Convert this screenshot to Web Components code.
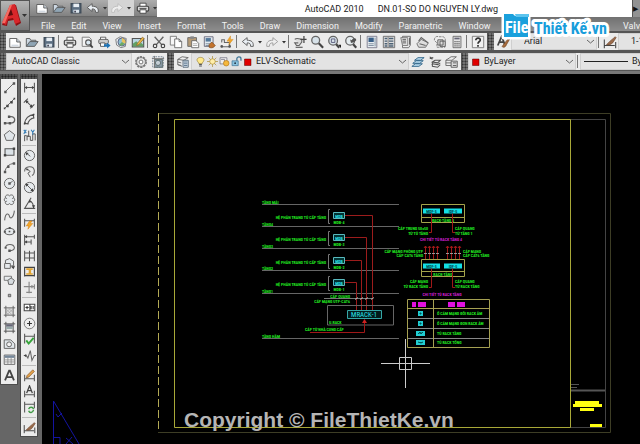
<!DOCTYPE html>
<html lang="vi">
<head>
<meta charset="utf-8">
<title>AutoCAD 2010</title>
<style>
html,body{margin:0;height:100%;overflow:hidden;background:#000}
</style>
</head>
<body>
<cad-app></cad-app>
<script>
const ICONS = {
  new:'<path d="M2 4h8l4 4v6H2z" fill="#fff" stroke="#555"/><path d="M10 4v4h4" fill="#ccd5df" stroke="#555"/><path d="M4 11h8v2H4z" fill="#d3dae2"/>',
  open:'<path d="M1.5 13V4h4l1 2h6v2" fill="#cdd8e3" stroke="#555"/><path d="M1.5 13l4-5.5H15L11 13z" fill="#8fa5b5" stroke="#555"/>',
  save:'<path d="M2.5 3h11v10.500h-11z" fill="#5c6f82" stroke="#3f4b58" stroke-width="1.500"/><path d="M5 3h6.500v4H5z" fill="#e8eef4"/><path d="M5 10h6.500v3.500H5z" fill="#dce4ec"/><path d="M6 11h2v2H6z" fill="#445"/>',
  undo:'<path d="M7 3v3c5 0 7.500 2 7 7h-3c0-3-1-4-4-4v3L1.500 7.500z" fill="#e9eef3" stroke="#555"/>',
  redo:'<path d="M9 3v3c-5 0-7.500 2-7 7h3c0-3 1-4 4-4v3l5.500-4.500z" fill="#eee" stroke="#999"/>',
  redolight:'<path d="M9 3v3c-5 0-7.500 2-7 7h3c0-3 1-4 4-4v3l5.500-4.500z" fill="#eee" stroke="#bbb"/>',
  print:'<path d="M4.500 6V2.500h7V6" fill="#fff" stroke="#444"/><rect x="1.500" y="6" width="13" height="5.500" rx="1.500" fill="#d9d9d9" stroke="#444" stroke-width="1.300"/><path d="M4.500 10h7v4h-7z" fill="#fff" stroke="#444"/><path d="M4 8.500h8" stroke="#444"/>',
  preview:'<path d="M2.500 2.500h8l2.500 2.500v8H2.500z" fill="#f4f4f4" stroke="#777"/><circle cx="9.500" cy="8.500" r="3" fill="#dce9f2" stroke="#555" stroke-width="1.300"/><path d="M11.500 11l3 3.500" stroke="#444" stroke-width="2"/>',
  publish:'<path d="M4 5.500v-3h6v3" fill="#fff" stroke="#555"/><rect x="2" y="5" width="11" height="5" rx="1.500" fill="#ccc" stroke="#555"/><path d="M4 9h5v4H4z" fill="#fff" stroke="#555"/><path d="M8 10.500h3.500V8.500l4 3.500-4 3.500v-2H8z" fill="#1f73b5"/>',
  dwf:'<path d="M2 5l5-3 7 2-1 9-5 1.500-5-3z" fill="#e5ebef" stroke="#777"/><circle cx="9" cy="8" r="4.500" fill="#8fc0d4" stroke="#557"/><path d="M9 3.500V8l4 2c1-3-1-6-4-6.500" fill="#e8c35c"/><path d="M9 8l-3 3c2 2 4 1.500 6-1z" fill="#6caa62"/>',
  render:'<path d="M1.500 4h13v9.500h-13z" fill="#b9d6e2" stroke="#555" stroke-width="1.300"/><path d="M2 13v-3l4-3 3 3 3-1 2 2v2z" fill="#63a065"/><path d="M7 10l6-7.500 2 1.500-6 7-2.500 1z" fill="#eeb84a" stroke="#8a6527" stroke-width=".8"/>',
  cut:'<path d="M3 2l8 9M13 2L5 11" stroke="#666" stroke-width="1.600"/><circle cx="3.500" cy="12.500" r="2" fill="none" stroke="#444" stroke-width="1.300"/><circle cx="12.500" cy="12.500" r="2" fill="none" stroke="#444" stroke-width="1.300"/>',
  copy:'<path d="M1.500 1.500h7v10h-7z" fill="#f6f6f6" stroke="#777"/><path d="M6.500 4.500h5l3 3v7h-8z" fill="#fff" stroke="#666"/><path d="M11.500 4.500v3h3" fill="none" stroke="#666"/>',
  paste:'<path d="M2 3h10v10H2z" fill="#b49a75" stroke="#666"/><path d="M5 1.500h4v3H5z" fill="#888"/><path d="M6.500 6.500h5l3 3v5h-8z" fill="#fff" stroke="#666"/><path d="M8 10h5M8 12h5" stroke="#aaa"/>',
  match:'<path d="M1.500 2h10v11h-10z" fill="#e2e9ef" stroke="#667"/><path d="M3 3.500h6v4H3z" fill="#54799b"/><path d="M3 10h5M3 12h4" stroke="#789"/><path d="M7 11l3-3 4 4c-2 3-5 3-7 2z" fill="#c3742e" stroke="#7a4518" stroke-width=".8"/>',
  blocked:'<path d="M1 13.500h10v-5H5v-3H2v3" fill="#eee" stroke="#666" stroke-width="1.200"/><circle cx="2" cy="13" r="1.500" fill="#555"/><circle cx="11" cy="13" r="1.500" fill="#555"/><path d="M12 1L8 7h3l-1 4 5-6h-3z" fill="#f2a72b" stroke="#ce8518" stroke-width=".5"/>',
  pan:'<path d="M2 5c2-2 4-1 8 0v3l-3 4H4L2 9h4" fill="#ddd" stroke="#666" stroke-width="1.300"/><path d="M3 14h8M12.500 1v8M8.500 5h7" stroke="#444" stroke-width="1.400"/>',
  zoom:'<circle cx="6.500" cy="6" r="4.500" fill="#d7e2e9" stroke="#666" stroke-width="1.500"/><path d="M10 9.500l5 5" stroke="#444" stroke-width="2.500"/>',
  zoomwin:'<circle cx="7" cy="6.500" r="5" fill="#d7e2e9" stroke="#666" stroke-width="1.500"/><path d="M5 4.500h4v4H5z" fill="none" stroke="#557"/><path d="M10.500 10.500l3.500 4" stroke="#444" stroke-width="2.500"/><path d="M13 11h3v4z" fill="#222"/>',
  zoomprev:'<circle cx="7" cy="6.500" r="5" fill="#e5ecef" stroke="#666" stroke-width="1.500"/><path d="M14 6c0-3-4-3-5 0l-2-1 1 4 4-1" fill="#555"/><path d="M10.500 10.500l3.500 4" stroke="#444" stroke-width="2.500"/>',
  props:'<path d="M2.500 1.500h11v13h-11z" fill="#e8edf1" stroke="#778"/><path d="M4 3h6v5H4z" fill="#395f87"/><path d="M4 10h6M4 12h6M11.500 3v10" stroke="#789"/>',
  design:'<path d="M1.500 1.500h13v13h-13z" fill="#ddd" stroke="#666"/><path d="M3 4h3M8 4h5M3 7h3M8 7h5M3 10h3M8 10h5M3 12.500h3M8 12.500h5" stroke="#4c6275" stroke-width="1.700"/><path d="M7 2v12" stroke="#777"/>',
  palette:'<path d="M4 1.500h9v10l-2 3H4z" fill="#eee" stroke="#666"/><path d="M2 3h8v9H4z" fill="#ddd" stroke="#777"/><path d="M4 5h4M4 7h4M4 9h4M12 3v8" stroke="#555"/>',
  sheets:'<path d="M1 10l5-5 8 4-3 5H3z" fill="#ddd" stroke="#666"/><path d="M3 7l3-4 8 6M4 10l7 2" fill="none" stroke="#666" stroke-width="1.300"/>',
  markup:'<path d="M1.500 6c0-4 3-5 5-4h5c3 1 3 4 2 6v6h-9v-5z" fill="#eee" stroke="#777" stroke-dasharray="3 1"/><path d="M5.500 5.500h6v6h-6zM8 7h6v6H8z" fill="#ddd" stroke="#555"/>',
  calc:'<path d="M3.500 1.500h9v13h-9z" fill="#e5e5e5" stroke="#666"/><path d="M5 3h6v2H5z" fill="#667"/><path d="M5 7.500h6M5 10h6M5 12.500h6" stroke="#666" stroke-width="1.500" stroke-dasharray="1.500 .8"/>',
  help:'<path d="M1.500 1.500h13v13h-13z" fill="#f1f1f1" stroke="#777"/><path d="M5.500 6c0-3.500 5.500-3 5 0-.5 2-2.500 1.500-2.500 4" fill="none" stroke="#333" stroke-width="2"/><path d="M7 11.500h2v2H7z" fill="#333"/>',
  textstyle:'<path d="M2 12L6.500 1.500 10 11M3.500 8h5" fill="none" stroke="#444" stroke-width="2"/><path d="M7 13l3-4 5-6 1 1-4 7c-1 3-4 4-5 2" fill="#a66b3d" stroke="#6d4425" stroke-width=".7"/>',
  dimstyle:'<path d="M1.500 5v10M1.500 12h12M14.500 8v7" stroke="#444" stroke-width="1.200"/><path d="M4 11l4-4 6-5 1 1-4 6c-2 2-5 3-7 2" fill="#9a6b4b" stroke="#6a4530" stroke-width=".7"/>',
  gear:'<circle cx="8" cy="8" r="5.800" fill="#eee" stroke="#777" stroke-width="2" stroke-dasharray="2.600 1"/><circle cx="8" cy="8" r="5" fill="#e8e8e8" stroke="#777"/><circle cx="8" cy="8" r="2.200" fill="#fff" stroke="#666"/>',
  workspace:'<path d="M2 2h12v12H2z" fill="none" stroke="#678" stroke-dasharray="2 1"/><path d="M4 5h9v9H4z" fill="#8999a8" stroke="#566"/><circle cx="8" cy="9" r="3" fill="#c4ced6" stroke="#566"/><path d="M1 4h14M4 1v14" stroke="#777"/>',
  layers:'<path d="M2 5l5-3 7 1-5 3zM2 8l4 1M2 11l4 1M2 5v6l5 2" fill="#eee" stroke="#666"/><path d="M8 6h6v8H8z" fill="#d5e0ea" stroke="#567"/><path d="M9 8h4M9 10h4M9 12h4" stroke="#57718a"/>',
  layers2:'<path d="M1 13l4-3h8l-4 3zM2 9.500l4-3h8l-4 3zM4 6l4-3h7l-4 3z" fill="#b5d8ec" stroke="#2f6488"/>',
  layers3:'<path d="M2 4l4-1M2 2l3 3M5 8l3-2h6l-3 3zM4 11l3-1M5 8v5l6 1 3-3M5 10l6 1 3-2" fill="none" stroke="#555" stroke-width="1.200"/>',
  layers4:'<path d="M1 6l6-4h6l-5 4zM1 6v6h6M1 9h6" fill="#eee" stroke="#666"/><path d="M7 7h7v7H7z" fill="#ddd" stroke="#555"/><path d="M9 9h4M9 12h4" stroke="#555"/>',
  bulb:'<path d="M5.500 11c0-2-3-3-2.500-6C4 1 12 1 13 5c.5 3-2.500 4-2.500 6z" fill="#ffe98c" stroke="#9a8338"/><path d="M6 12.500h4M6 14.500h4" stroke="#555" stroke-width="1.500"/>',
  sun:'<path d="M8 0v16M0 8h16M2.500 2.500l11 11M13.500 2.500l-11 11" stroke="#a98c34"/><circle cx="8" cy="8" r="4" fill="#ffeeaa" stroke="#a98c34"/>',
  vpsun:'<path d="M1.500 2.500h10v9h-10z" fill="#eee" stroke="#667"/><path d="M3 5h5v4" fill="none" stroke="#667"/><circle cx="10.500" cy="10.500" r="4" fill="#f5b83c" stroke="#b5791c"/>',
  unlock:'<path d="M8.500 7V4c0-3.500 6-3.500 6 0v3" fill="none" stroke="#3c7294" stroke-width="1.800"/><path d="M1.500 7h9v7h-9z" fill="#8cc3df" stroke="#3c7294"/><circle cx="6" cy="10.500" r="1.300" fill="#234"/>',
  red:'<path d="M1 2h13v13H1z" fill="#e00000" stroke="#500"/>',
  caret:'<path d="M4 6h8l-4 5z" fill="#333"/>',
  line:'<path d="M3 13L13 3" stroke="#666" stroke-width="1.200"/><path d="M1.500 12h3v3h-3zM12 1.500h3v3h-3z" fill="#555"/>',
  xline:'<path d="M2 14L14 2" stroke="#666" stroke-width="1.200"/><path d="M1 13h2v2H1zM4 9.500h3v3H4zM9 5h3v3H9zM13 1h2v2h-2z" fill="#444"/>',
  pline:'<path d="M2 12.500h7c7 0 7-8 1-8H8" fill="none" stroke="#666" stroke-width="1.600"/><path d="M1 11h3v3H1zM7 11h3v3H7zM6 3h3v3H6z" fill="#555"/>',
  polygon:'<path d="M8 2l6.500 5-2.500 7H4L1.500 7z" fill="#e1e6ea" stroke="#666" stroke-width="1.200"/>',
  rect:'<path d="M2.500 4.500h11v8h-11z" fill="#dce3e8" stroke="#555" stroke-width="1.300"/><path d="M1 11h3v3H1zM12 3h3v3h-3z" fill="#444"/>',
  arc:'<path d="M2.500 13.500C3 8 7 3.500 13.500 3" fill="none" stroke="#666" stroke-width="1.200"/><path d="M1 12h3v3H1zM5 5.500h3v3H5zM12 1.500h3v3h-3z" fill="#555"/>',
  circle:'<circle cx="8" cy="8" r="6.300" fill="#e6eaed" stroke="#666" stroke-width="1.200"/><path d="M8 8l4-3" stroke="#555"/><path d="M6.500 6.500h3v3h-3z" fill="#555"/>',
  cloud:'<path d="M8 3.500C6 1 2 3 3 6c-2 1.500-2 3.500 0 4.500C2 14 6 15.500 8 13c2 2.500 6 1 5-2.500 2-1 2-3 0-4.500 1-3-3-5-5-2.500z" fill="#e6eaed" stroke="#666" stroke-width="1.200"/><path d="M3 6l2 1M13 6l-2 1M3 10.500L5 10M13 10.500L11 10" stroke="#666"/>',
  spline:'<path d="M2 14c1-10 5-9 6-5s5 2 6-7" fill="none" stroke="#666" stroke-width="1.300"/>',
  ellipse:'<ellipse cx="8" cy="8" rx="6" ry="4" fill="#e6eaed" stroke="#666" stroke-width="1.300"/><path d="M1 7h2.500v2.500H1zM12.500 7H15v2.500h-2.500zM7 2.500h2.500V5H7zM7 7h2v2H7z" fill="#555"/>',
  earc:'<path d="M3 8c1-5 10-5 11 0 0 3-2 4-6 4" fill="none" stroke="#666" stroke-width="1.300"/><path d="M2 7h2.500v2.500H2zM6.500 10.500H9.500V13.500H6.500z" fill="#555"/>',
  insert:'<path d="M3 8V4l5-2 5 3v5l-2 2M3 8h6v6H2V8zM9 11h5l-1 3" fill="#e6eaed" stroke="#666" stroke-width="1.200"/><path d="M10 12l4-1-1 4z" fill="#444"/>',
  block:'<path d="M1.500 9V4h9v5z" fill="#e6eaed" stroke="#666"/><path d="M6 9l4-3 4 3-2 5H7z" fill="#d7dce0" stroke="#666" stroke-width="1.200"/>',
  point:'<path d="M6.500 6.500h3v3h-3z" fill="#aaa" stroke="#555"/>',
  hatch:'<path d="M4 4h8v8H4z" fill="#ddd"/><path d="M1 3.500h14M1 12.500h14M3.500 1v14M12.500 1v14" stroke="#666" stroke-width="1.200"/><path d="M4 5l7 7M7 4l5 5M4 9l3 3M5 12l7-7M4 9l5-5" stroke="#999" stroke-width=".7"/>',
  gradient:'<path d="M1 3.500h14M1 12.500h14M3.500 1v14M12.500 1v14" stroke="#555" stroke-width="1.200"/><path d="M4 4h8v3H4z" fill="#667"/><path d="M4 7h8v3H4z" fill="#9aa"/>',
  region:'<path d="M1.500 14V3.500h8l5 5V14z" fill="#e3e8ec" stroke="#666" stroke-width="1.200"/><circle cx="7.500" cy="9" r="3" fill="#f2f2f2" stroke="#666" stroke-width="1.200"/>',
  table:'<path d="M1.500 2.500h13v11.500h-13z" fill="#f4f4f4" stroke="#555"/><path d="M2 3h12v3H2z" fill="#75879a"/><path d="M2 8.500h12M2 11h12M6 6v8M10 6v8" stroke="#888"/>',
  mtext:'<path d="M2.500 14L7.500 2h1l5 12M4.500 10h7" fill="none" stroke="#444" stroke-width="2.200"/>',
  dlin:'<path d="M2 2v12M14 2v12M2 8h12" stroke="#555" stroke-width="1.300"/><path d="M2 8l3-2v4zM14 8l-3-2v4z" fill="#444"/>',
  dali:'<path d="M1 7l5-5M9 14l5-5M4 5l7 7" stroke="#555" stroke-width="1.300"/><path d="M3 4l4 1-3 3zM12 13l-4-1 3-3z" fill="#444"/>',
  darc:'<path d="M2 14C2 7 7 2 14 2M6 14c0-4 4-8 8-8M1 13h6M13 1v6" fill="none" stroke="#555" stroke-width="1.400"/><path d="M1 14l1-4 2 3zM14 1l-4 1 3 2z" fill="#444"/>',
  dord:'<path d="M2 15V8l5 1V2M5 14V9h4v5h3V6h3v8" fill="none" stroke="#555" stroke-width="1.200"/><path d="M1 1l3 4M4 1L1 6M10 1l2 3 2-3M12 4v3" stroke="#317bb5" stroke-width="1.300"/>',
  drad:'<circle cx="8" cy="8" r="6.300" fill="#e6eaed" stroke="#666" stroke-width="1.200"/><path d="M9 9L3.500 4.500" stroke="#444"/><path d="M3 4l4 1-3 3z" fill="#444"/>',
  djog:'<path d="M2 8c0-7 11-8 12-1 0 3-1 5-3 6" fill="none" stroke="#666" stroke-width="1.300"/><path d="M5 5l4 3-3 2 3 5" fill="none" stroke="#444"/><path d="M3 4l4 1-2 2z" fill="#444"/>',
  ddia:'<circle cx="8" cy="8" r="6.300" fill="#e6eaed" stroke="#666" stroke-width="1.200"/><path d="M4 4l8 8" stroke="#444"/><path d="M3 3l4 1-3 3zM13 13l-4-1 3-3z" fill="#444"/>',
  dang:'<path d="M10 1L2 14h13M8 5c4 1 5 5 5 9" fill="none" stroke="#555" stroke-width="1.300"/><path d="M8 3l3 3-4 1zM13 14l-2-4h4z" fill="#444"/>',
  quick:'<path d="M2 2v10M14 2v10M2 4.500h12" stroke="#555" stroke-width="1.300"/><path d="M8 5L4 11h3l-1 4 6-7H9l2-3z" fill="#f3a72a" stroke="#d48112" stroke-width=".6"/>',
  dbase:'<path d="M2 2v13M2 4.500h12M14 2v5M2 11h8M10 8v6" stroke="#555" stroke-width="1.300"/><path d="M2 4.500l3-2v4zM2 11l3-2v4z" fill="#444"/>',
  dcont:'<path d="M2 2v13M8 2v13M14 2v13M2 5h12M2 11h12" stroke="#555" stroke-width="1.300"/>',
  dspace:'<path d="M2 2v12M14 2v12M2 3h12M2 13h12" stroke="#444" stroke-width="1.400"/><path d="M4 4h8v2H4zM4 10h8v2H4zM7 6h3v4H7z" fill="#e2a532"/>',
  dbreak:'<path d="M7.500 1v14M4 14h7M1 7h13M14 4v6M11 5v4" stroke="#888" stroke-width="1.400"/>',
  tol:'<path d="M1.500 4h13v8h-13z" fill="#fff" stroke="#444" stroke-width="1.300"/><path d="M8.500 4v8M3 8h4M5 6v4M10 10V6M12.500 10V6" stroke="#333" stroke-width="1.300"/>',
  center:'<circle cx="8" cy="8" r="6.500" fill="#eee" stroke="#666"/><path d="M8 5v6M5 8h6" stroke="#333" stroke-width="1.300"/>',
  inspect:'<path d="M2 1v12M14 1v12M2 4h12" stroke="#555" stroke-width="1.300"/><path d="M4 9l3 4 6-7" fill="none" stroke="#36a43b" stroke-width="2.400"/>',
  jogline:'<path d="M1 8h3l2 3 3-9 2 12 3-6h2" fill="none" stroke="#666" stroke-width="1.300"/><path d="M1 8l3-2v4z" fill="#444"/>',
  dedit:'<path d="M2 7v8M14 7v8M2 12h12" stroke="#555" stroke-width="1.300"/><path d="M5 8l7-7 2 2-7 7-3 1z" fill="#e4a24b" stroke="#7b5226" stroke-width=".8"/>',
  dtedit:'<path d="M2 7v8M14 7v8M2 12h12" stroke="#555" stroke-width="1.300"/><path d="M4.500 10L8 1l3.500 9M6 7h4" fill="none" stroke="#444" stroke-width="1.600"/>',
  dupdate:'<path d="M2 1v13M14 1v8M2 4h12" stroke="#555" stroke-width="1.300"/><path d="M7 10c1-3 5-3 6 0M13 11c-1 4-5 4-6 1" fill="none" stroke="#3f9a45" stroke-width="1.800"/>'
};

class CadIcon extends HTMLElement {
  connectedCallback(){
    const r = this.attachShadow({mode:'open'});
    r.innerHTML = `<style>:host{display:block;width:var(--icon,14px);height:var(--icon,14px);flex:none}svg{display:block;width:100%;height:100%}</style>
    <svg viewBox="0 0 16 16" fill="none" aria-hidden="true">${ICONS[this.getAttribute('name')]}</svg>`;
  }
}
customElements.define('cad-icon', CadIcon);

class CadTool extends HTMLElement {
  connectedCallback(){
    const n = this.getAttribute('name');
    const r = this.attachShadow({mode:'open'});
    r.innerHTML = `<style>:host{display:block;flex:none;width:17px;height:16px}:host([narrow]){width:7px;--icon:8px}
    button{all:unset;display:flex;width:100%;height:100%;align-items:center;justify-content:center}</style>
    <button type="button" aria-label="${n}"><cad-icon name="${n}"></cad-icon></button>`;
  }
}
customElements.define('cad-tool', CadTool);

class CadSep extends HTMLElement {
  connectedCallback(){
    this.attachShadow({mode:'open'}).innerHTML = `<style>:host{display:block;flex:none;width:1px;height:13px;margin:0 2px 0 1px;background:#777}</style>`;
  }
}
customElements.define('cad-sep', CadSep);

class CadToolbar extends HTMLElement {
  connectedCallback(){
    this.attachShadow({mode:'open'}).innerHTML = `<style>
    :host{display:flex;flex:none;align-items:center;height:17px;background:#ebebeb;box-sizing:border-box;padding-right:1px}
    :host([grow]){flex:1 0 auto}
    .grip{align-self:stretch;width:6px;flex:none;background:radial-gradient(circle,#333 30%,#777 70%) 2px 1px/3px 3px #666}
    </style><div class="grip"></div><slot></slot>`;
  }
}
customElements.define('cad-toolbar', CadToolbar);

class CadCombo extends HTMLElement {
  connectedCallback(){
    const v = this.getAttribute('value');
    this.attachShadow({mode:'open'}).innerHTML = `<style>
    :host{display:flex;flex:none;align-items:center;height:17px;box-sizing:border-box;background:#e3e3e3;border:1px solid #cfcfcf;width:var(--w);padding-left:3px;gap:2px}
    select{all:unset;flex:1;min-width:0;height:15px;font:var(--ui);line-height:15px;color:#222;padding-left:2px;box-sizing:border-box;white-space:nowrap;overflow:hidden}
    svg{width:7px;height:5px;flex:none;margin-right:2px}
    </style><slot></slot><select aria-label="${v}"><option>${v}</option></select>
    <svg viewBox="0 0 7 5"><path d="M0 1l3.500 3L7 1" fill="none" stroke="#666"/></svg>`;
  }
}
customElements.define('cad-combo', CadCombo);

class CadTitlebar extends HTMLElement {
  connectedCallback(){
    this.attachShadow({mode:'open'}).innerHTML = `<style>
    :host{display:grid;grid-template-columns:30px 1fr;grid-template-rows:17px 14px;background:#fff;border-bottom:2px solid #555}
    .app{all:unset;grid-row:1/3;display:flex;align-items:center;background:linear-gradient(#b5b5b5,#777);box-sizing:border-box;border:1px solid #555}
    .app svg{width:28px;height:28px}
    .top{display:flex;align-items:center;min-width:0}
    .quick{display:flex;align-items:center;align-self:stretch;width:127px;box-sizing:border-box;padding-left:3px;background:linear-gradient(#adadad,#818181);border-bottom:1px solid #666;flex:none}
    .title{flex:1;display:flex;justify-content:center;gap:14px;margin:0;font:var(--ui);color:#222;white-space:pre;padding-left:14px}
    .light{background:#d4d4d4;display:flex;align-self:stretch;align-items:center;padding-right:2px}
    .more{all:unset;width:8px;height:17px;background:#929292;border-left:1px solid #555;box-sizing:border-box;font:7px/16px "DejaVu Sans",sans-serif;color:#111}
    nav{display:flex;align-items:center;gap:16px;padding:3px 0 0 11px;background:linear-gradient(#717171,#8d8d8d);overflow:hidden}
    a{font:var(--ui);color:#f2f2f2;text-decoration:none;white-space:nowrap}
    a.last{margin-left:auto}
    </style>
    <button class="app" type="button" aria-label="Application menu"><svg viewBox="0 0 28 28">
      <path d="M10 4l5-1 5 18-5 3-2-6-6 1-1 5-5-1z" fill="#8e0f12"/><path d="M9 3l5-1 5 18-5 2-2-6-5 1-2 6-4-2z" fill="#d8262a"/><path d="M10 7l2 6-5 1z" fill="#5d0d0e"/><path d="M9 3l2 0-7 18-3 0z" fill="#f36c62"/><path d="M21 12h5l-2.500 3z" fill="#333"/></svg></button>
    <div class="top"><div class="quick"><cad-tool name="new"></cad-tool><cad-tool name="open"></cad-tool><cad-tool name="save"></cad-tool><cad-tool name="undo"></cad-tool><cad-tool name="caret" narrow></cad-tool><span class="light"><cad-tool name="redolight"></cad-tool><cad-tool name="caret" narrow></cad-tool></span><cad-tool name="print"></cad-tool><cad-tool name="caret" narrow></cad-tool></div>
    <h1 class="title"><span>AutoCAD 2010</span><span>DN.01-SO DO NGUYEN LY.dwg</span></h1><button class="more" type="button">▶</button></div>
    <nav>${['File','Edit','View','Insert','Format','Tools','Draw','Dimension','Modify','Parametric','Window'].map(t=>`<a href="#">${t}</a>`).join('')}<a href="#" class="last">Valv</a></nav>`;
  }
}
customElements.define('cad-titlebar', CadTitlebar);

class CadPalette extends HTMLElement {
  connectedCallback(){
    const items = this.getAttribute('tools').split(' ').map(n=> n==='|' ? '<hr>' : `<cad-tool name="${n}"></cad-tool>`).join('');
    this.attachShadow({mode:'open'}).innerHTML = `<style>
    :host{display:flex;flex-direction:column;align-items:center;align-self:flex-start;width:18px;box-sizing:border-box;background:#ececec;border:1px solid #4c4c4c;border-top:0;--icon:13px;padding-bottom:1px}
    .grip{align-self:stretch;height:5px;background:radial-gradient(circle,#222 30%,#555 70%) 3px 1px/3px 3px #555}
    hr{width:14px;height:1px;margin:2px 0 1px;border:0;background:#bbb}
    </style><div class="grip"></div>${items}`;
  }
}
customElements.define('cad-palette', CadPalette);

class CadDrawing extends HTMLElement {
  connectedCallback(){
    const t=(x,y,s,c='g',a='')=>`<text x="${x}" y="${y}" class="${c}"${a}>${s}</text>`;
    const end=' text-anchor="end"', mid=' text-anchor="middle"';
    const floors=[[204.5,'TẦNG MÁI'],[226.5,'TẦNG4'],[248.5,'TẦNG3'],[270.5,'TẦNG2'],[293.500,'TẦNG1'],[338.5,'TẦNG HẦM']]
      .map(([y,s])=>`<path d="M262 ${y}H399" stroke="#666"/>`+t(262,y-1,s)).join('');
    const racks=[[215.5,372.5,4],[237.5,366.5,3],[260.5,361.5,2],[282.5,356.5,1]].map(([y,x,n])=>
      `<path d="M330 ${y-6}H328.5V${y+8}H330" stroke="#777"/><path d="M345 ${y}H${x}V310" stroke="#9c1c1c"/>
       <path d="M333.5 ${y-3}h11v6h-11z" stroke="#58b9bd" fill="#033"/>`+t(339,y+2,'MDB','c',mid)+t(339,y+8,'MDB-'+n,'g',mid)+t(326,y+3,'HỆ PHÂN TRANG TỦ CẤP TẦNG','g',end)).join('');
    const cab=(y,h,s)=>`<path d="M421.5 ${y}h43v${h}h-43zM421.5 ${y+h-5}h43" stroke="#a4a44b"/>
      <path d="M423 ${y+4}h17v5h-17zM444 ${y+4}h18v5h-18z" fill="#12dfe6"/>`+t(431.5,y+8,'MDF-5','k',mid)+t(453,y+8,'IDF-5','k',mid)+t(443,y+h-1,s,'g',mid)+
      `<path d="M431.5 ${y+9}V${y+28}H429M452.5 ${y+9}V${y+28}H455" stroke="#a01818"/>`;
    const feeds=[425,429,433,437,447,451,455,459].map(x=>`<path d="M${x}.5 246v14M${x-1} 248l1.500-2 1.500 2" stroke="#a01818"/><path d="M${x-1} 253.500h3" stroke="#999"/>`).join('');
    this.attachShadow({mode:'open'}).innerHTML = `<style>
    :host{display:block;flex:1;min-width:0;position:relative;background:#000;overflow:hidden}
    svg{display:block;width:100%;height:100%}
    text{font:bold 4px "Roboto Condensed","Liberation Sans Narrow","Roboto",sans-serif}
    .g{fill:#22ee22}.m{fill:#d01fd0}.c{fill:#2be4ea}.k{fill:#00454a}
    text.mr{font-size:7px;font-weight:400}
    .mark{position:absolute;left:142px;bottom:12px;margin:0;font:bold 21px/24px "Liberation Sans",Arial,sans-serif;color:#b5b5b5;white-space:nowrap}
    </style>
    <svg viewBox="42 74 598 370" preserveAspectRatio="xMinYMin slice" fill="none" role="img" aria-label="ELV schematic">
      <path d="M158 113.500H610.500V432.500H158" stroke="#3d3d25"/><path d="M158.500 113V432" stroke="#b3aa55" stroke-dasharray="8 3"/>
      <path d="M570 119.500H605.500V427.500H570" stroke="#444"/><path d="M571 390.500H605" stroke="#555" stroke-width="2"/><path d="M571 384.500h8M571 387.500h6" stroke="#555"/>
      <path d="M174.500 119.500H570.500V427.500H174.500z" stroke="#a8a838"/>
      <path d="M575 401h24v3h3v3h-29v-3h2zM580 408h14v3h-14zM590 424h12v3h-12z" fill="#ff1"/>
      ${floors}${racks}
      <path d="M324 298.500H373" stroke="#777"/><path d="M355 299.500l3-2M360 299.500l3-2M365 299.500l3-2M371 299.500l3-2" stroke="#aaa"/>
      ${t(350,298,'CÁP QUANG','g',end)}${t(350,303,'CÁP MẠNG UTP-CAT6','g',end)}
      <path d="M327.500 305.500H393.500V325H327.500z" stroke="#666"/>${t(329,324,'U.RACK')}
      <path d="M347.500 310.500h34v8h-34z" stroke="#35a6a6" fill="#021a1a"/>${t(364,317,'MRACK-1','c mr',mid)}
      <path d="M310 332.500H364.500V321" stroke="#a01818"/><path d="M362 323l2.500-4 2.500 4z" fill="#c22"/>${t(305,331,'CÁP TỪ NHÀ CUNG CẤP')}
      ${cab(204.5,18,'RACK-TẦNG 4')}
      ${t(428,230,'CÁP TRUNG 50x50','g',end)}${t(428,235,'TỪ TỦ TẦNG','g',end)}${t(455,230,'CÁP QUANG')}${t(455,235,'TỪ TẦNG 1')}
      ${t(441,241,'CHI TIẾT TỦ RACK TẦNG 4','m',mid)}
      ${feeds}${t(423,253,'CÁP MẠNG PHÒNG UTP','g',end)}${t(423,257,'CÁP CAT6 TẦNG','g',end)}${t(463,253,'CÁP MẠNG')}${t(463,257,'CÁP CAT6 TẦNG')}
      ${cab(259.5,17,'RACK-TẦNG')}
      ${t(428,283,'CÁP MẠNG','g',end)}${t(428,288,'TỪ RACK TẦNG','g',end)}${t(455,283,'CÁP QUANG')}${t(455,288,'TỪ RACK TẦNG')}
      ${t(442,296,'CHI TIẾT TỦ RACK TẦNG','m',mid)}
      <path d="M407.500 318.500h82M407.500 328.500h82M407.500 338.500h82" stroke="#888"/>
      <path d="M407.500 299.500h82v48h-82zM407.500 308.500h82M433.500 299.500v48" stroke="#a5a052"/>
      <path d="M412 302h4v5h-4zM418 302h8v5h-8zM448 302h7v5h-7zM457 302h8v5h-8z" fill="#e010e0"/>
      <path d="M418 311h5v5h-5zM418 321h5v5h-5zM416 331h9v5h-9zM416 340h9v5h-9z" fill="#21cdd2"/>
      <path d="M420 313h1v1h-1zM420 323h1v1h-1zM418 334l2-2 1 2 2-2M418 342l3 1 2-1" fill="#044" stroke="#055"/>
      ${t(437,315,'Ổ CẮM MẠNG ĐÔI RACK ÂM')}${t(437,325,'Ổ CẮM MẠNG ĐƠN RACK ÂM')}${t(437,335,'TỦ RACK TẦNG')}${t(437,344,'TỦ RACK TỔNG')}
      <path d="M381 363.500H430M405.500 339V388M399.500 357.500h12v12h-12z" stroke="#ccc"/>
      <path d="M53.500 444V401L79 444M56 414l2 3 4-4M53 437.500h7V444M66 438l7 6M72 437l-6 7" stroke="#1414a0"/>
    </svg><p class="mark">Copyright © FileThietKe.vn</p>`;
  }
}
customElements.define('cad-drawing', CadDrawing);

class SiteBadge extends HTMLElement {
  connectedCallback(){
    this.attachShadow({mode:'open'}).innerHTML = `<style>:host{display:block;position:absolute;top:12px;right:30px;width:110px;height:28px}
    svg{display:block;width:100%;height:100%;overflow:visible}
    .name,.file{font:bold 16px "Roboto Condensed","Liberation Sans Narrow","Liberation Sans",sans-serif}</style>
    <svg viewBox="0 0 110 28" role="img" aria-label="File Thiết Kế.vn">
    <path d="M4 2h9l2 2h13v21H4z" fill="#fff" stroke="#fff" stroke-width="5" stroke-linejoin="round"/>
    <path d="M4 2h9l2 2h13v21H4z" fill="#1aa0dc"/><path d="M15 2h14v3H16z" fill="#5cc4ee"/>
    <text class="file" x="5" y="21" fill="#fff">File</text><text class="name" x="34" y="22" fill="#189ddb" stroke="#fff" stroke-width="6" stroke-linejoin="round" paint-order="stroke">Thiết Kế.vn</text></svg>`;
  }
}
customElements.define('site-badge', SiteBadge);

class CadApp extends HTMLElement {
  connectedCallback(){
    const tools = s => s.split(' ').map(n=> n==='|' ? '<cad-sep></cad-sep>' : n==='v' ? '<cad-tool name="caret" narrow></cad-tool>' : `<cad-tool name="${n}"></cad-tool>`).join('');
    this.attachShadow({mode:'open'}).innerHTML = `<style>
    :host{--ui:9px/12px "Roboto","Open Sans",sans-serif;display:flex;flex-direction:column;height:100vh;position:relative;overflow:hidden;background:#666}
    .rows{display:flex;flex-direction:column;gap:3px;background:#555;padding-bottom:1px}
    .row{display:flex;gap:1px;overflow:hidden}
    .work{flex:1;min-height:0;display:flex;gap:2px;border-top:3px solid #777;background:#666}
    .state{display:flex;align-items:center;gap:1px;--icon:11px}
    .swatch{--icon:8px}
    .line{width:44px;height:1px;background:#222;flex:none}
    cad-drawing{margin-left:2px}
    </style>
    <cad-titlebar></cad-titlebar>
    <div class="rows">
      <div class="row"><cad-toolbar>${tools('new open save | print preview publish dwf render | cut copy paste match blocked | undo v redo v | pan zoom zoomwin zoomprev | props design palette sheets markup calc | help')}</cad-toolbar>
      <cad-toolbar grow>${tools('textstyle')}<cad-combo value="Arial" style="--w:86px"><span style="width:5px"></span></cad-combo><cad-sep></cad-sep>${tools('dimstyle')}<cad-combo value="1-100" style="--w:80px"><span style="width:5px"></span></cad-combo></cad-toolbar></div>
      <div class="row"><cad-toolbar><cad-combo value="AutoCAD Classic" style="--w:126px"></cad-combo>${tools('gear workspace')}</cad-toolbar>
      <cad-toolbar>${tools('layers')}<cad-combo value="ELV-Schematic" style="--w:218px"><span class="state"><cad-icon name="bulb"></cad-icon><cad-icon name="sun"></cad-icon><cad-icon name="vpsun"></cad-icon><cad-icon name="unlock"></cad-icon></span><cad-icon class="swatch" name="red"></cad-icon></cad-combo>${tools('layers2 layers3 layers4')}</cad-toolbar>
      <cad-toolbar grow><cad-combo value="ByLayer" style="--w:108px"><cad-icon class="swatch" name="red"></cad-icon></cad-combo><cad-sep></cad-sep><cad-combo value="ByLayer" style="--w:110px"><span class="line"></span></cad-combo></cad-toolbar></div>
    </div>
    <div class="work">
      <cad-palette tools="line xline pline polygon rect arc circle cloud spline ellipse earc insert block point hatch gradient region table mtext"></cad-palette>
      <cad-palette tools="dlin dali darc dord | drad djog ddia dang | quick dbase dcont dspace dbreak | tol center inspect jogline | dedit dtedit dupdate | dimstyle"></cad-palette>
      <cad-drawing></cad-drawing>
    </div>
    <site-badge></site-badge>`;
  }
}
customElements.define('cad-app', CadApp);
</script>
</body>
</html>
